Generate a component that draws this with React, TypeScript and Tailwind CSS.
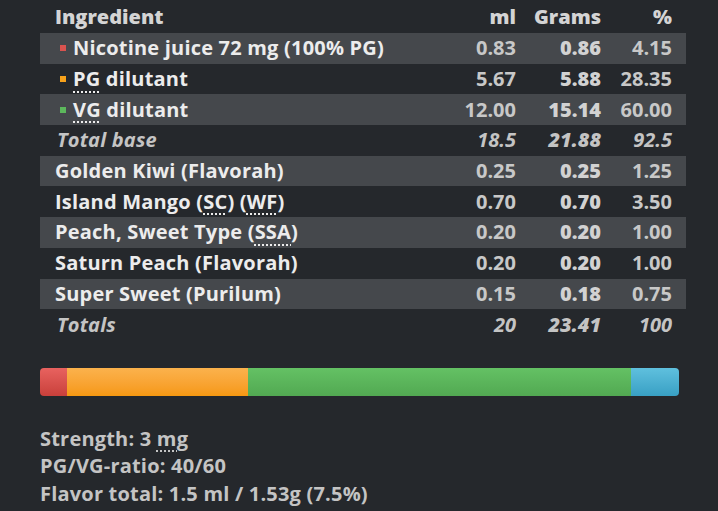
import React from "react";

type Row = {
  name: React.ReactNode;
  ml: string;
  grams: string;
  pct: string;
  dot?: string;
  total?: boolean;
};

const Abbr: React.FC<{ children: React.ReactNode }> = ({ children }) => (
  <span className="underline decoration-dotted decoration-[1.5px] underline-offset-[5px]">
    {children}
  </span>
);

const rows: Row[] = [
  { name: "Nicotine juice 72 mg (100% PG)", ml: "0.83", grams: "0.86", pct: "4.15", dot: "bg-[#d9534f]" },
  { name: <><Abbr>PG</Abbr> dilutant</>, ml: "5.67", grams: "5.88", pct: "28.35", dot: "bg-[#f7a21b]" },
  { name: <><Abbr>VG</Abbr> dilutant</>, ml: "12.00", grams: "15.14", pct: "60.00", dot: "bg-[#5cb85c]" },
  { name: "Total base", ml: "18.5", grams: "21.88", pct: "92.5", total: true },
  { name: "Golden Kiwi (Flavorah)", ml: "0.25", grams: "0.25", pct: "1.25" },
  { name: <>Island Mango (<Abbr>SC</Abbr>) (<Abbr>WF</Abbr>)</>, ml: "0.70", grams: "0.70", pct: "3.50" },
  { name: <>Peach, Sweet Type (<Abbr>SSA</Abbr>)</>, ml: "0.20", grams: "0.20", pct: "1.00" },
  { name: "Saturn Peach (Flavorah)", ml: "0.20", grams: "0.20", pct: "1.00" },
  { name: "Super Sweet (Purilum)", ml: "0.15", grams: "0.18", pct: "0.75" },
  { name: "Totals", ml: "20", grams: "23.41", pct: "100", total: true },
];

const App: React.FC = () => {
  return (
    <div
      className="w-[718px] h-[511px] overflow-hidden bg-[#25282c] text-[20px]"
      style={{ fontFamily: '"Open Sans", "DejaVu Sans", sans-serif' }}
    >
      {/* recipe table */}
      <div className="ml-[40px] w-[646px]">
        <div className="flex h-[33px] items-center pr-[14px] font-extrabold text-[#d4d4d4]">
          <div className="flex-1 pl-[15px]">Ingredient</div>
          <div className="w-[80px] text-right">ml</div>
          <div className="w-[85px] text-right">Grams</div>
          <div className="w-[71px] text-right">%</div>
        </div>

        {rows.map((row, i) => (
          <div
            key={i}
            className={`flex h-[30.7px] items-center pr-[14px] ${
              i % 2 === 0 && !row.total ? "bg-[#45484c]" : ""
            } ${row.total ? "italic text-[#c4c4c4]" : ""}`}
          >
            <div
              className={`flex flex-1 items-center font-bold tracking-[0.2px] ${
                row.total ? "pl-[17px]" : "text-[#ececec] pl-[15px]"
              }`}
            >
              {row.dot && <span className={`ml-[5px] mr-[7px] h-[6px] w-[6px] ${row.dot}`} />}
              <span className="whitespace-nowrap">{row.name}</span>
            </div>
            <div className={`w-[80px] text-right font-bold ${row.total ? "" : "text-[#c8c8c8]"}`}>
              {row.ml}
            </div>
            <div className={`w-[85px] text-right font-extrabold ${row.total ? "" : "text-[#d2d2d2]"}`}>
              {row.grams}
            </div>
            <div className={`w-[71px] text-right font-bold ${row.total ? "" : "text-[#c8c8c8]"}`}>
              {row.pct}
            </div>
          </div>
        ))}
      </div>

      {/* ratio bar */}
      <div className="ml-[40px] mt-[28px] flex h-[28px] w-[639px] overflow-hidden rounded-[4px]">
        <div className="w-[4.15%] bg-gradient-to-b from-[#e8625f] to-[#c9403b]" />
        <div className="w-[28.35%] bg-gradient-to-b from-[#fbb24c] to-[#f6980f]" />
        <div className="w-[60%] bg-gradient-to-b from-[#64c164] to-[#52a952]" />
        <div className="w-[7.5%] bg-gradient-to-b from-[#5fc0de] to-[#38a0c4]" />
      </div>

      {/* summary */}
      <div className="ml-[40px] mt-[29px] font-bold text-[#c4c4c4] leading-[27.5px] tracking-[0.2px]">
        <div>
          Strength: 3 <Abbr>mg</Abbr>
        </div>
        <div>PG/VG-ratio: 40/60</div>
        <div>Flavor total: 1.5 ml / 1.53g (7.5%)</div>
      </div>
    </div>
  );
};

export default App;
